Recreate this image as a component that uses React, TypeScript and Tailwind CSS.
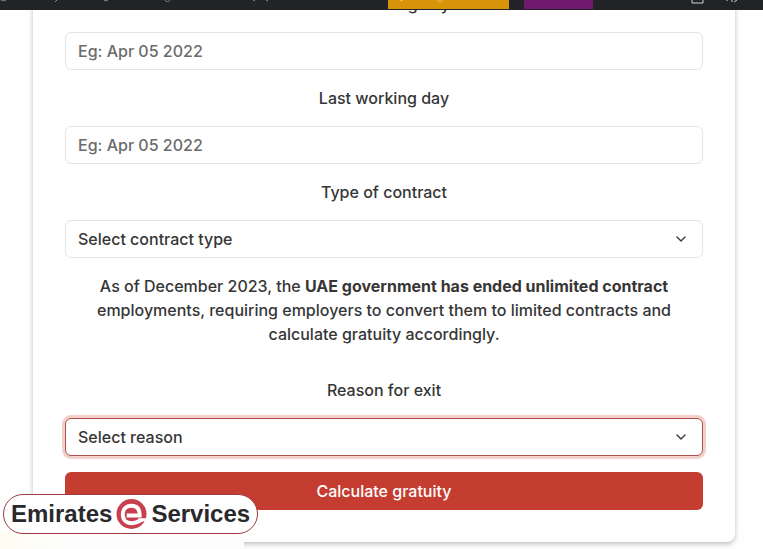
import { ChevronDown } from "lucide-react";

export default function GratuityCalculatorPage() {
  return (
    <div className="relative h-screen overflow-hidden bg-[#fefefe] font-['Inter',sans-serif] text-base font-medium text-[#363636]">
      {/* Top bar */}
      <header className="absolute inset-x-0 top-0 z-10 h-[10px] bg-[#212327]">
        <svg className="h-full w-full" fill="none" aria-hidden="true">
          <path d="M388 0h121v9H388z" fill="#d79409" />
          <path d="M524 0h69v9h-69z" fill="#6f1a6e" />
          <path
            d="M1 0c2 1 3 1 5 0M57 0l-2 2M104 0c1 1 3 1 4 0M165 0c1 2 4 2 5 0M253 0l2 1M266 0l2 1"
            stroke="#8b8d90"
          />
          <path d="M400 0l3 1M437 0c2 2 5 2 6 0" stroke="#f0c868" />
          <path d="M692 0v3h11V0" stroke="#d0d2d4" />
          <path d="M727 0v1M732 0v2M737 0l-3 2" stroke="#d0d2d4" />
        </svg>
      </header>

      {/* Calculator card */}
      <main className="mr-7 ml-[33px] rounded-b-lg bg-white px-8 pb-8 shadow-[0_2px_5px_rgba(0,0,0,0.25)]">
        <form className="flex flex-col text-center">
          <TextField id="first-day" label="First working day" />
          <TextField id="last-day" label="Last working day" />
          <SelectField
            id="contract"
            label="Type of contract"
            placeholder="Select contract type"
            boxClass="border-[#e4e4e4]"
          />
          <p className="mb-10">
            As of December 2023, the{" "}
            <strong className="font-bold">
              UAE government has ended unlimited contract
            </strong>{" "}
            employments, requiring employers to convert them to limited
            contracts and calculate gratuity accordingly.
          </p>
          <SelectField
            id="reason"
            label="Reason for exit"
            placeholder="Select reason"
            boxClass="border-[#b0504a] ring-3 ring-[#f3d0cc]"
          />
          <button
            type="button"
            className="h-[38px] rounded-md bg-[#c53c30] text-white"
          >
            Calculate gratuity
          </button>
        </form>
      </main>

      {/* Corner strip behind the badge */}
      <div className="absolute bottom-0 left-0 h-4 w-[244px] bg-gradient-to-b from-white to-[#fcfcfc]">
        <div className="h-full w-16 bg-gradient-to-r from-[#fdfdf0] to-transparent"></div>
      </div>
      <BrandBadge />
    </div>
  );
}

function TextField({ id, label }: { id: string; label: string }) {
  return (
    <>
      <label htmlFor={id} className="-mt-2 mb-4">
        {label}
      </label>
      <input
        id={id}
        type="text"
        placeholder="Eg: Apr 05 2022"
        className="mb-6 h-[38px] w-full rounded-md border border-[#e4e4e4] px-3 placeholder:text-[#6b6b6b]"
      />
    </>
  );
}

function SelectField({
  id,
  label,
  placeholder,
  boxClass,
}: {
  id: string;
  label: string;
  placeholder: string;
  boxClass: string;
}) {
  return (
    <>
      <label htmlFor={id} className="-mt-2 mb-4">
        {label}
      </label>
      <div className="relative mb-4">
        <select
          id={id}
          className={`h-[38px] w-full appearance-none rounded-md border bg-white px-3 outline-none ${boxClass}`}
        >
          <option>{placeholder}</option>
        </select>
        <ChevronDown
          size={16}
          className="pointer-events-none absolute top-[11px] right-[14px]"
        />
      </div>
    </>
  );
}

function BrandBadge() {
  return (
    <div className="absolute bottom-[15px] left-[3px] flex h-10 items-center gap-1 rounded-full border border-[#9c3a40] bg-white px-[7px] font-['Liberation_Sans',sans-serif] text-[24px] font-bold text-[#29282c]">
      <span>Emirates</span>
      <svg width="31" height="32" viewBox="0 0 32 32" fill="none">
        <circle cx="16" cy="16" r="15.500" fill="#c8404f" />
        {/* notch that opens the ring at the lower right */}
        <path d="M23 20.500h9.500v4l-4-1-5 2z" fill="#fff" />
        <path
          d="M11 17.500h13.500c0-6.500-3-10-8.500-10s-9 3.500-9 9 3.500 9 9.500 9c3.500 0 6-1 8.500-3"
          stroke="#fff"
          strokeWidth="4"
        />
      </svg>
      <span>Services</span>
    </div>
  );
}
